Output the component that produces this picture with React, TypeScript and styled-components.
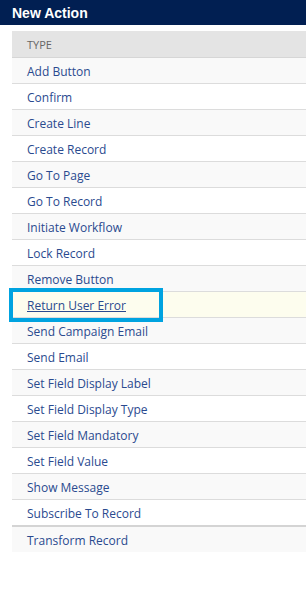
import styled, { createGlobalStyle } from "styled-components";

const GlobalStyle = createGlobalStyle`
  html, body {
    margin: 0;
    padding: 0;
    background: #fff;
    font-family: "Open Sans", "Liberation Sans", sans-serif;
    overflow: hidden;
  }
`;

const Page = styled.div`
  width: 306px;
  height: 603px;
  display: flex;
  flex-direction: column;
`;

const TitleBar = styled.div`
  height: 25px;
  background: #011f52;
  color: #fff;
  font-family: "Liberation Sans", Arial, sans-serif;
  font-weight: 700;
  font-size: 14px;
  display: flex;
  align-items: center;
  padding-left: 12px;
`;

const Table = styled.div`
  margin: 6px 0 0 12px;
  display: flex;
  flex-direction: column;
`;

const HeadRow = styled.div`
  height: 26px;
  background: #e4e4e4;
  border-bottom: 1px solid #d6d6d6;
  display: flex;
  align-items: center;
  padding-left: 15px;
  font-size: 11px;
  color: #666;
  text-transform: uppercase;
`;

const Row = styled.div<{ $alt: boolean; $hover?: boolean; $thick?: boolean }>`
  position: relative;
  height: 23px;
  display: flex;
  align-items: center;
  padding: 2px 0 0 15px;
  background: ${(p) => (p.$hover ? "#fdfdee" : p.$alt ? "#f9f9f9" : "#fff")};
  border-bottom: ${(p) => (p.$thick ? "2px solid #d4d4d4" : "1px solid #dcdcdc")};
  &:last-child {
    border-bottom: none;
  }
`;

const Link = styled.span<{ $hover?: boolean }>`
  font-size: 12px;
  color: #2a4a8f;
  text-decoration: ${(p) => (p.$hover ? "underline" : "none")};
`;

const Callout = styled.div`
  position: absolute;
  z-index: 2;
  left: -3px;
  top: -4px;
  width: 146px;
  height: 26px;
  border: 4px solid #00a3e0;
  pointer-events: none;
`;

const actions = [
  "Add Button",
  "Confirm",
  "Create Line",
  "Create Record",
  "Go To Page",
  "Go To Record",
  "Initiate Workflow",
  "Lock Record",
  "Remove Button",
  "Return User Error",
  "Send Campaign Email",
  "Send Email",
  "Set Field Display Label",
  "Set Field Display Type",
  "Set Field Mandatory",
  "Set Field Value",
  "Show Message",
  "Subscribe To Record",
  "Transform Record",
];

export default function App() {
  return (
    <Page>
      <GlobalStyle />
      <TitleBar>New Action</TitleBar>
      <Table>
        <HeadRow>Type</HeadRow>
        {actions.map((a, i) => {
          const hover = a === "Return User Error";
          return (
            <Row
              key={a}
              $alt={i % 2 === 0}
              $hover={hover}
              $thick={a === "Subscribe To Record"}
            >
              <Link $hover={hover}>{a}</Link>
              {hover && <Callout />}
            </Row>
          );
        })}
      </Table>
    </Page>
  );
}
